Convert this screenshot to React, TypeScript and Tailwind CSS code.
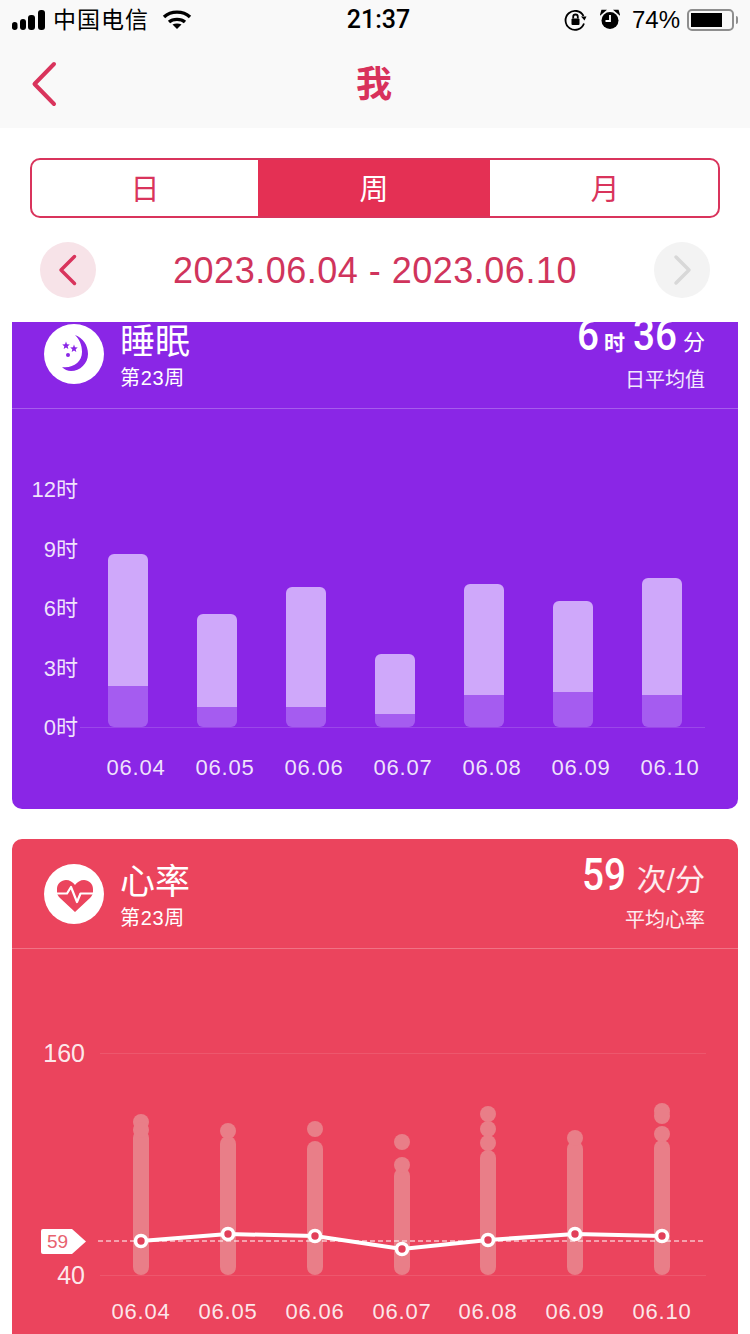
const SANS = "font-['Liberation_Sans','Noto_Sans_CJK_SC',sans-serif]";

const sleepBars = [
  { x: 96, top: 145, split: 277, label: "06.04", cx: 124 },
  { x: 185, top: 205, split: 298, label: "06.05", cx: 213 },
  { x: 274, top: 178, split: 298, label: "06.06", cx: 302 },
  { x: 363, top: 245, split: 305, label: "06.07", cx: 391 },
  { x: 452, top: 175, split: 286, label: "06.08", cx: 480 },
  { x: 541, top: 192, split: 283, label: "06.09", cx: 569 },
  { x: 630, top: 169, split: 286, label: "06.10", cx: 658 },
];

const sleepAxis = [
  { label: "12时", y: 80 },
  { label: "9时", y: 140 },
  { label: "6时", y: 199 },
  { label: "3时", y: 259 },
  { label: "0时", y: 318 },
];

// x and y are relative to the chart, which starts at x=12, y=949
const heartCols = [
  { x: 129, main: 181, dots: [173, 181], label: "06.04" },
  { x: 216, main: 187, dots: [182], label: "06.05" },
  { x: 303, main: 192, dots: [180], label: "06.06" },
  { x: 390, main: 219, dots: [193, 216], label: "06.07" },
  { x: 476, main: 201, dots: [165, 180, 194], label: "06.08" },
  { x: 563, main: 192, dots: [189], label: "06.09" },
  { x: 650, main: 191, dots: [162, 167, 185], label: "06.10" },
];

const heartLine = [
  [129, 292],
  [216, 285],
  [303, 287],
  [390, 300],
  [476, 291],
  [563, 285],
  [650, 287],
];

function StatusBar() {
  return (
    <div className={`flex h-10 items-center justify-between px-3 text-[24px] text-black ${SANS}`}>
      <div className="flex w-[207px] items-center">
        <svg width="33" height="20" viewBox="0 0 33 20" fill="#000">
          <rect x="0" y="12" width="5.500" height="8" rx="2.700" />
          <rect x="8" y="9" width="6" height="11" rx="3" />
          <rect x="16" y="5" width="7" height="15" rx="3" />
          <rect x="26" y="0" width="7" height="20" rx="3" />
        </svg>
        <span className="ml-[8px] text-[23px] tracking-[1px]">中国电信</span>
        <svg className="ml-[13px]" width="30" height="22" viewBox="0 0 30 22" fill="none" stroke="#000" strokeWidth="3.400">
          <path d="M2 8C9 1.500 21 1.500 28 8" />
          <path d="M7 13C11 9.500 19 9.500 23 13" />
          <path d="M15 20L10.500 15.500C13 14 17 14 19.500 15.500Z" fill="#000" stroke="none" />
        </svg>
      </div>
      <span className="font-['Roboto',sans-serif] text-[25px] font-medium">21:37</span>
      <div className="flex w-[200px] items-center justify-end">
        <svg width="24" height="24" viewBox="0 0 24 24" fill="none" stroke="#000" strokeWidth="1.800">
          <path d="M19.500 8A9.500 9.500 0 1 0 20 15.500" />
          <path d="M17 8.500L22.500 8.500L20.500 12.500Z" fill="#000" stroke="none" />
          <rect x="7.500" y="10.500" width="8" height="6.500" rx="1" fill="#000" stroke="none" />
          <path d="M9.200 10.500V8.800A2.300 2.300 0 0 1 13.800 8.800V10.500" />
        </svg>
        <svg className="ml-[12px]" width="20" height="22" viewBox="0 0 20 22" fill="#000">
          <circle cx="10" cy="11.500" r="8.500" />
          <path d="M1 5L5 1.500L2 1.500Z M19 5L15 1.500L18 1.500Z" stroke="#000" strokeWidth="1.500" />
          <path d="M10 6V12H5.500" fill="none" stroke="#fff" strokeWidth="1.800" />
        </svg>
        <span className="ml-[12px] text-[24px]">74%</span>
        <div className="ml-[7px] flex h-[22px] w-[47px] items-center rounded-[5px] border-2 border-[#8e8e8e] pl-[2px]">
          <div className="h-[14px] w-[31px] bg-black" />
        </div>
        <div className="ml-[2px] h-[8px] w-[2px] rounded-r-sm bg-[#8e8e8e]" />
      </div>
    </div>
  );
}

function NavBar() {
  return (
    <div className="relative flex h-[88px] items-start justify-center">
      <svg className="absolute left-[30px] top-[21px]" width="30" height="46" viewBox="0 0 30 46" fill="none" stroke="#d9345c" strokeWidth="4" strokeLinecap="round" strokeLinejoin="round">
        <path d="M24 3L4.500 23L24 43" />
      </svg>
      <span className="ml-[-2px] mt-[15px] font-['Noto_Sans_CJK_SC',sans-serif] text-[36px] font-bold leading-[52px] text-[#d8315b]">我</span>
    </div>
  );
}

function Tabs() {
  return (
    <div className="mx-[30px] flex h-[60px] overflow-hidden rounded-[10px] border-2 border-[#d9345c] font-['Noto_Sans_CJK_SC',sans-serif] text-[29px] font-normal">
      <div className="flex w-[226px] items-center justify-center text-[#d9345c]">日</div>
      <div className="flex w-[232px] items-center justify-center bg-[#e43054] text-white">周</div>
      <div className="flex flex-1 items-center justify-center pl-[2px] text-[#d9345c]">月</div>
    </div>
  );
}

function DateRow() {
  return (
    <div className={`mt-[24px] flex items-center justify-between px-[40px] ${SANS}`}>
      <div className="flex h-14 w-14 items-center justify-center rounded-full bg-[#f7e3e8]">
        <svg width="20" height="32" viewBox="0 0 20 32" fill="none" stroke="#d9345c" strokeWidth="3.500" strokeLinecap="round" strokeLinejoin="round">
          <path d="M16.500 2.500L3 16L16.500 29.500" />
        </svg>
      </div>
      <span className="mt-[2px] text-[36px] tracking-[0.5px] text-[#d0345c]">2023.06.04 - 2023.06.10</span>
      <div className="flex h-14 w-14 items-center justify-center rounded-full bg-[#f3f3f3]">
        <svg width="20" height="32" viewBox="0 0 20 32" fill="none" stroke="#d8d8d8" strokeWidth="3.500" strokeLinecap="round" strokeLinejoin="round">
          <path d="M4 3L17 16L4 29" />
        </svg>
      </div>
    </div>
  );
}

function MoonIcon() {
  return (
    <svg width="60" height="60" viewBox="0 0 60 60">
      <circle cx="30" cy="30" r="30" fill="#fff" />
      <path d="M31 11C39 14 44 21 44 30C44 39.500 36 47 27 47C23.500 47 20.500 45.500 18 43C29 44.500 38 38 38 28C38 21 35.500 15.500 31 11Z" fill="#8a26e6" />
      <path d="M22 17.500L23 20.200L25.800 20.400L23.700 22.200L24.300 25L22 23.500L19.700 25L20.300 22.200L18.200 20.400L21 20.200Z" fill="#8a26e6" />
      <path d="M30 20.500L31 23.200L33.800 23.400L31.700 25.200L32.300 28L30 26.500L27.700 28L28.300 25.200L26.200 23.400L29 23.200Z" fill="#8a26e6" />
      <circle cx="24" cy="31" r="2" fill="#8a26e6" />
    </svg>
  );
}

function HeartIcon() {
  return (
    <svg width="60" height="60" viewBox="0 0 60 60">
      <circle cx="30" cy="30" r="30" fill="#fff" />
      <path d="M31 48L16 34C12.500 30.500 13 28 13 25C13 19.500 17.500 16 22 16C25.500 16 29 18 31 21C33 18 36.500 16 40 16C44.500 16 49 19.500 49 25C49 28 49.500 30.500 46 34Z" fill="#eb445d" />
      <path d="M11 29.500H23L27 23L33 38L36.500 29.500H51" fill="none" stroke="#fff" strokeWidth="2.200" strokeLinejoin="round" />
    </svg>
  );
}

function Digits({ text, className }: { text: string; className: string }) {
  // the numerals in the picture are narrower than any installed font, so they get squeezed
  return <span className={`inline-block origin-left scale-x-[0.88] font-['Roboto',sans-serif] text-[44px] font-medium ${className}`}>{text}</span>;
}

function CardHeader({ icon, title, value, caption }: { icon: React.ReactNode; title: string; value: React.ReactNode; caption: string }) {
  return (
    <div className="flex h-[110px] items-start border-b border-white/25 pl-[32px] pr-[33px] text-white">
      <div className="mt-[25px]">{icon}</div>
      <div className="ml-[16px] mt-[15px] flex flex-col font-['Noto_Sans_CJK_SC',sans-serif]">
        <span className="text-[35px] leading-[50px]">{title}</span>
        <span className={`mt-[1px] text-[20px] leading-[26px] tracking-[0.7px] ${SANS}`}>第23周</span>
      </div>
      <div className="ml-auto mt-[11px] flex flex-col items-end">
        <div className="flex h-[50px] items-baseline leading-[50px]">{value}</div>
        <span className={`mt-[7px] text-[20px] leading-[26px] text-white/90 ${SANS}`}>{caption}</span>
      </div>
    </div>
  );
}

function SleepChart() {
  return (
    <svg className={`block ${SANS}`} width="726" height="400" viewBox="0 0 726 400">
      <line x1="68" y1="318.500" x2="693" y2="318.500" stroke="#fff" strokeOpacity="0.15" />
      {sleepAxis.map((a) => (
        <text key={a.label} x="66" y={a.y + 8} textAnchor="end" fontSize="22" fill="#fff" fillOpacity="0.88">
          {a.label}
        </text>
      ))}
      {sleepBars.map((b) => (
        <g key={b.label}>
          <path d={`M${b.x} ${b.split}V${b.top + 6}a6 6 0 0 1 6 -6h28a6 6 0 0 1 6 6V${b.split}Z`} fill="#cfa8fa" />
          <path d={`M${b.x} ${b.split}H${b.x + 40}V312a6 6 0 0 1 -6 6h-28a6 6 0 0 1 -6 -6Z`} fill="#a55cf0" />
          <text x={b.cx} y="366" textAnchor="middle" fontSize="22" letterSpacing="0.8" fill="#fff" fillOpacity="0.88">
            {b.label}
          </text>
        </g>
      ))}
    </svg>
  );
}

function HeartChart() {
  return (
    <svg className={`block ${SANS}`} width="726" height="400" viewBox="0 0 726 400">
      <line x1="88" y1="104.500" x2="694" y2="104.500" stroke="#fff" strokeOpacity="0.1" />
      <line x1="88" y1="326.500" x2="694" y2="326.500" stroke="#fff" strokeOpacity="0.1" />
      <text x="73" y="113" textAnchor="end" fontSize="25" fill="#fff" fillOpacity="0.9">160</text>
      <text x="73" y="335" textAnchor="end" fontSize="25" fill="#fff" fillOpacity="0.9">40</text>
      {heartCols.map((c) => (
        <g key={c.label}>
          <rect x={c.x - 8} y={c.main} width="16" height={326 - c.main} rx="8" fill="#e97e88" />
          {c.dots.map((d) => (
            <circle key={d} cx={c.x} cy={d} r="8" fill="#e97e88" />
          ))}
          <text x={c.x} y="370" textAnchor="middle" fontSize="22" letterSpacing="0.8" fill="#fff" fillOpacity="0.88">
            {c.label}
          </text>
        </g>
      ))}
      <line x1="86" y1="292" x2="694" y2="292" stroke="#fff" strokeWidth="1" strokeDasharray="5 3" />
      <path d="M31 280H60L74 292.500L60 305H31a2 2 0 0 1 -2 -2V282a2 2 0 0 1 2 -2Z" fill="#fff" />
      <text x="35" y="299" fontSize="19" fill="#e8636f">59</text>
      <polyline points={heartLine.map((p) => p.join(",")).join(" ")} fill="none" stroke="#fff" strokeWidth="4" />
      {heartLine.map(([x, y]) => (
        <circle key={x} cx={x} cy={y} r="5.500" fill="#e2405a" stroke="#fff" strokeWidth="3.600" />
      ))}
    </svg>
  );
}

export default function App() {
  return (
    <div className="flex h-[1334px] w-[750px] flex-col overflow-hidden bg-white">
      <div className="bg-[#f9f9f9]">
        <StatusBar />
        <NavBar />
      </div>
      <div className="h-[194px] bg-white pt-[30px]">
        <Tabs />
        <DateRow />
      </div>
      <div className="flex-1 overflow-hidden">
        <div className="mt-[-23px] flex flex-col gap-[30px] px-[12px]">
          <div className="overflow-hidden rounded-[10px] bg-[#8a26e6]">
            <CardHeader
              icon={<MoonIcon />}
              title="睡眠"
              caption="日平均值"
              value={
                <>
                  <Digits text="6" className="w-[22px]" />
                  <span className={`ml-[5px] text-[21px] font-bold ${SANS}`}>时</span>
                  <Digits text="36" className="ml-[8px] w-[45px]" />
                  <span className={`ml-[5px] text-[22px] ${SANS}`}>分</span>
                </>
              }
            />
            <SleepChart />
          </div>
          <div className="overflow-hidden rounded-[10px] bg-[#eb445d]">
            <CardHeader
              icon={<HeartIcon />}
              title="心率"
              caption="平均心率"
              value={
                <>
                  <Digits text="59" className="w-[45px]" />
                  <span className={`ml-[10px] text-[30px] text-white/90 ${SANS}`}>次/分</span>
                </>
              }
            />
            <HeartChart />
          </div>
        </div>
      </div>
    </div>
  );
}
